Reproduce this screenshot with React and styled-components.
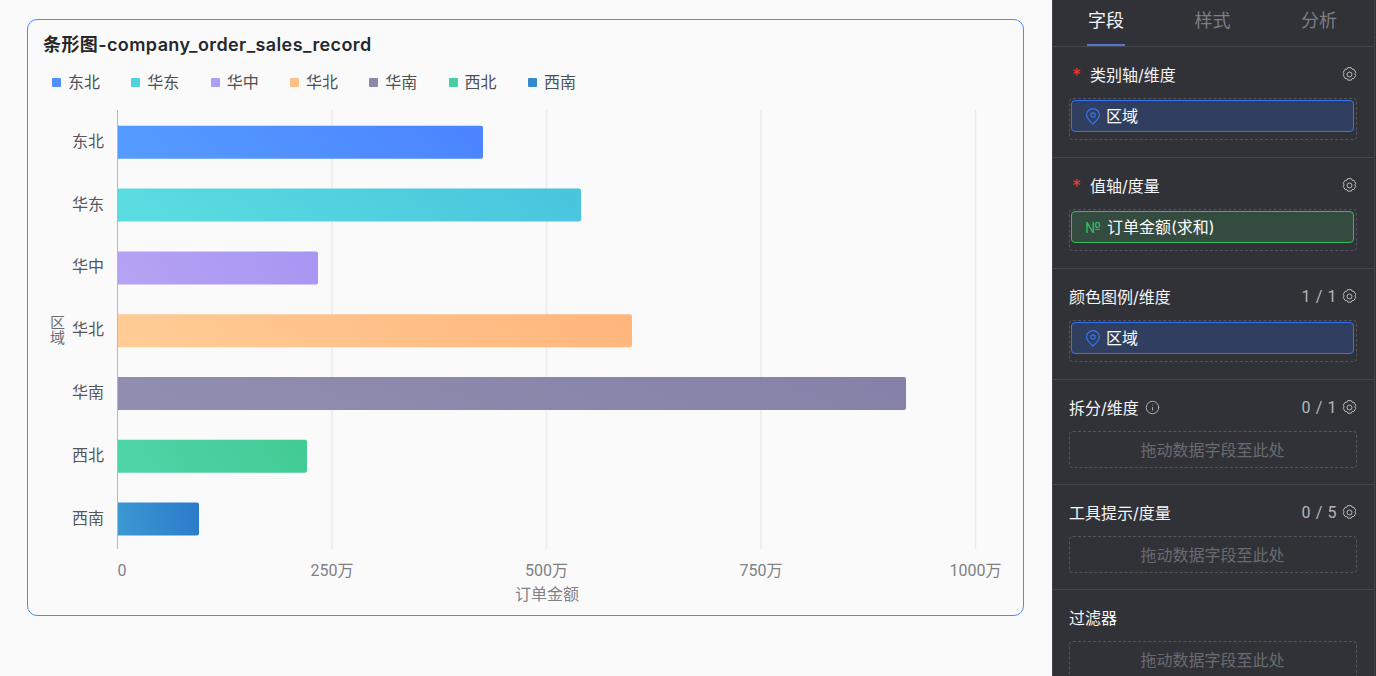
import React from 'react'
import styled, { createGlobalStyle } from 'styled-components'
import { Info } from 'lucide-react'

const FONT = `Inter, "Noto Sans CJK SC", sans-serif`

const REGIONS = [
  { name: '东北', width: 365, color: '#4f90ff', from: '#559bff', to: '#4c85ff' },
  { name: '华东', width: 463, color: '#50d2de', from: '#5adde0', to: '#49c5de' },
  { name: '华中', width: 200, color: '#ae9df3', from: '#b6a2f4', to: '#a797f2' },
  { name: '华北', width: 514, color: '#ffc088', from: '#ffcc96', to: '#ffb67c' },
  { name: '华南', width: 788, color: '#8a88ab', from: '#908eb0', to: '#8581a8' },
  { name: '西北', width: 189, color: '#49cf9e', from: '#4fd4a8', to: '#43cb94' },
  { name: '西南', width: 81, color: '#3388ce', from: '#3b97d2', to: '#2b7bca' },
]

const TICKS = [
  { label: '0', x: 122 },
  { label: '250万', x: 332 },
  { label: '500万', x: 546.5 },
  { label: '750万', x: 761 },
  { label: '1000万', x: 975.5 },
]

const GlobalStyle = createGlobalStyle`
  html, body {
    margin: 0;
    height: 100%;
    overflow: hidden;
    background: #fafafa;
    font-family: ${FONT};
  }
`

const Page = styled.div`
  display: flex;
  height: 676px;
  overflow: hidden;
`

const Main = styled.main`
  flex: 0 0 1051px;
  box-sizing: border-box;
  padding: 19px 28px 0 27px;
  background: #fafafa;
`

const Card = styled.section`
  box-sizing: border-box;
  height: 597px;
  border: 1px solid #4a8cfa;
  border-radius: 10px;
  background: #fafafa;
`

const Title = styled.h1`
  margin: 0;
  padding: 13px 0 0 15px;
  font-size: 18px;
  line-height: 24px;
  font-weight: 600;
  letter-spacing: 0.4px;
  color: #26272b;
`

const Legend = styled.ul`
  display: flex;
  gap: 31.3px;
  margin: 0;
  padding: 15px 0 0 24px;
  list-style: none;
`

const LegendItem = styled.li`
  display: flex;
  align-items: center;
  gap: 7px;
  font-size: 16px;
  line-height: 20px;
  color: #4f5054;
`

const Swatch = styled.span`
  width: 9px;
  height: 9px;
  border-radius: 1px;
  background: ${({ color }) => color};
`

const Chart = styled.svg`
  display: block;
  margin: 8px 0 0 -28px;
  font-family: ${FONT};
`

const AxisName = styled.text`
  writing-mode: vertical-rl;
  text-orientation: upright;
  font-size: 15px;
  fill: #6c6d71;
`

const Panel = styled.aside`
  flex: 1;
  display: flex;
  box-sizing: border-box;
  border-left: 1px solid #44454a;
  background: #313237;
  color: #f0f0f2;
`

const PanelBody = styled.div`
  flex: 0 0 320px;
  border-right: 1px solid #3f4045;
`

const Rail = styled.div`
  flex: 1;
  height: 37px;
  border-bottom: 1px solid #46474c;
`

const Tabs = styled.nav`
  display: flex;
  gap: 68.5px;
  box-sizing: border-box;
  height: 47px;
  padding: 0 0 0 34px;
  border-bottom: 1px solid #46474c;
`

const Tab = styled.div`
  box-sizing: border-box;
  height: 46px;
  width: 38px;
  padding-top: 9px;
  text-align: center;
  font-size: 18px;
  line-height: 24px;
  color: ${({ active }) => active ? '#f4f4f6' : '#7d7e83'};
  border-bottom: 2px solid ${({ active }) => active ? '#5577c9' : 'transparent'};
`

const Section = styled.section`
  box-sizing: border-box;
  height: ${({ height }) => height}px;
  padding: 16px 17px 0 16px;
  border-bottom: 1px solid #46474c;
  &:last-child { border-bottom: 0; }
`

const Header = styled.header`
  display: flex;
  align-items: center;
  height: 22px;
  font-size: 16px;
  color: #f6f6f8;
`

const Star = styled.span`
  width: 21px;
  padding: 3px 0 0 3px;
  box-sizing: border-box;
  color: #e5383b;
  font-size: 18px;
`

const HeaderTitle = styled.span`
  flex: 1;
  display: flex;
  align-items: center;
  gap: 6px;
`

const Count = styled.span`
  margin-right: 5px;
  font-size: 16px;
  color: #b5b6ba;
  font-family: Roboto, sans-serif;
  letter-spacing: 0.6px;
`

const Drop = styled.div`
  box-sizing: border-box;
  margin-top: 13px;
  width: 288px;
  height: ${({ empty }) => empty ? 37 : 42}px;
  padding: 1px 2px 1px 1px;
  border: 1px dashed #55565b;
  border-radius: 4px;
  display: flex;
  align-items: ${({ empty }) => empty ? 'center' : 'flex-start'};
  justify-content: center;
  color: #6a6b70;
  font-size: 16px;
`

const Pill = styled.div`
  box-sizing: border-box;
  flex: 1;
  height: 32px;
  display: flex;
  align-items: center;
  gap: 5px;
  padding-left: 13px;
  border: 1px solid ${({ kind }) => kind === 'measure' ? '#2fbf5c' : '#3474f2'};
  border-radius: 4px;
  background: ${({ kind }) => kind === 'measure' ? '#344b40' : '#303f60'};
  color: #fbfbfd;
  font-size: 16px;
`

const Label = styled.span`
  padding-bottom: 2px;
`

const NumberMark = styled.span`
  width: 17px;
  color: #2fbf5c;
  font-size: 15px;
`

const Gear = () => (
  <svg width="15" height="15" viewBox="1.2 1 11.6 12.2" fill="none" stroke="#c4c5c8" strokeWidth="0.75">
    <path d="M5.6 1.5h2.8l.7 1.3 1.5.1 1.5 2.4-.7 1.3.7 1.3-1.5 2.4-1.5.1-.7 1.3H5.6l-.7-1.3-1.5-.1-1.5-2.4.7-1.3-.7-1.3 1.5-2.4 1.5-.1z" />
    <circle cx="7" cy="7.1" r="2" />
  </svg>
)

const Pin = () => (
  <svg width="16" height="17" viewBox="0 0 16 17" fill="none" stroke="#3474f2" strokeWidth="1.2">
    <path d="M8 16C5 13.4 1.6 10.4 1.6 7a6.4 6.4 0 0 1 12.8 0c0 3.4-3.4 6.4-6.4 9z" />
    <circle cx="8" cy="7" r="2.2" />
  </svg>
)

const BarChart = () => (
  <Chart width="1023" height="510" viewBox="0 100 1023 510">
    <defs>
      {REGIONS.map((r) => (
        <linearGradient key={r.name} id={`bar-${r.name}`} x1="0" y1="0.5" x2="1" y2="0.4">
          <stop offset="0" stopColor={r.from} />
          <stop offset="1" stopColor={r.to} />
        </linearGradient>
      ))}
    </defs>
    {TICKS.slice(1).map((t) => (
      <line key={t.label} x1={t.x} x2={t.x} y1="110" y2="549" stroke="#ebebec" strokeWidth="1.5" />
    ))}
    <line x1="117.5" x2="117.5" y1="110" y2="549" stroke="#b8b8ba" />
    {REGIONS.map((r, i) => {
      const y = 125.8 + i * 62.8
      return (
        <g key={r.name}>
          <text x="104" y={y + 21} textAnchor="end" fontSize="16" fill="#56575b">{r.name}</text>
          <path
            d={`M118 ${y}h${r.width - 2}a2 2 0 0 1 2 2v29a2 2 0 0 1 -2 2h-${r.width - 2}z`}
            fill={`url(#bar-${r.name})`}
          />
        </g>
      )
    })}
    <AxisName x="56.5" y="329.5" textAnchor="middle">区域</AxisName>
    {TICKS.map((t) => (
      <text key={t.label} x={t.x} y="575.5" textAnchor="middle" fontSize="16" fill="#808185" fontFamily={`Roboto, "Noto Sans CJK SC", sans-serif`}>{t.label}</text>
    ))}
    <text x="547" y="599.5" textAnchor="middle" fontSize="16" fill="#808185">订单金额</text>
  </Chart>
)

const FieldSection = ({ height, required, title, count, info, noGear, children }) => (
  <Section height={height}>
    <Header>
      {required && <Star>*</Star>}
      <HeaderTitle>
        {title}
        {info && <Info size={15} strokeWidth={1.3} color="#c5c6c9" />}
      </HeaderTitle>
      {count && <Count>{count}</Count>}
      {!noGear && <Gear />}
    </Header>
    {children}
  </Section>
)

const EmptyDrop = () => <Drop empty><Label>拖动数据字段至此处</Label></Drop>

const RegionDrop = () => (
  <Drop>
    <Pill><Pin /><Label>区域</Label></Pill>
  </Drop>
)

export default function App() {
  return (
    <Page>
      <GlobalStyle />
      <Main>
        <Card>
          <Title>条形图-company_order_sales_record</Title>
          <Legend>
            {REGIONS.map((r) => (
              <LegendItem key={r.name}>
                <Swatch color={r.color} />
                {r.name}
              </LegendItem>
            ))}
          </Legend>
          <BarChart />
        </Card>
      </Main>
      <Panel>
        <PanelBody>
          <Tabs>
            <Tab active>字段</Tab>
            <Tab>样式</Tab>
            <Tab>分析</Tab>
          </Tabs>
          <FieldSection height={111} required title="类别轴/维度">
            <RegionDrop />
          </FieldSection>
          <FieldSection height={111} required title="值轴/度量">
            <Drop>
              <Pill kind="measure"><NumberMark>№</NumberMark><Label>订单金额(求和)</Label></Pill>
            </Drop>
          </FieldSection>
          <FieldSection height={111} title="颜色图例/维度" count="1 / 1">
            <RegionDrop />
          </FieldSection>
          <FieldSection height={105} title="拆分/维度" count="0 / 1" info>
            <EmptyDrop />
          </FieldSection>
          <FieldSection height={105} title="工具提示/度量" count="0 / 5">
            <EmptyDrop />
          </FieldSection>
          <FieldSection height={90} title="过滤器" noGear>
            <EmptyDrop />
          </FieldSection>
        </PanelBody>
        <Rail />
      </Panel>
    </Page>
  )
}
